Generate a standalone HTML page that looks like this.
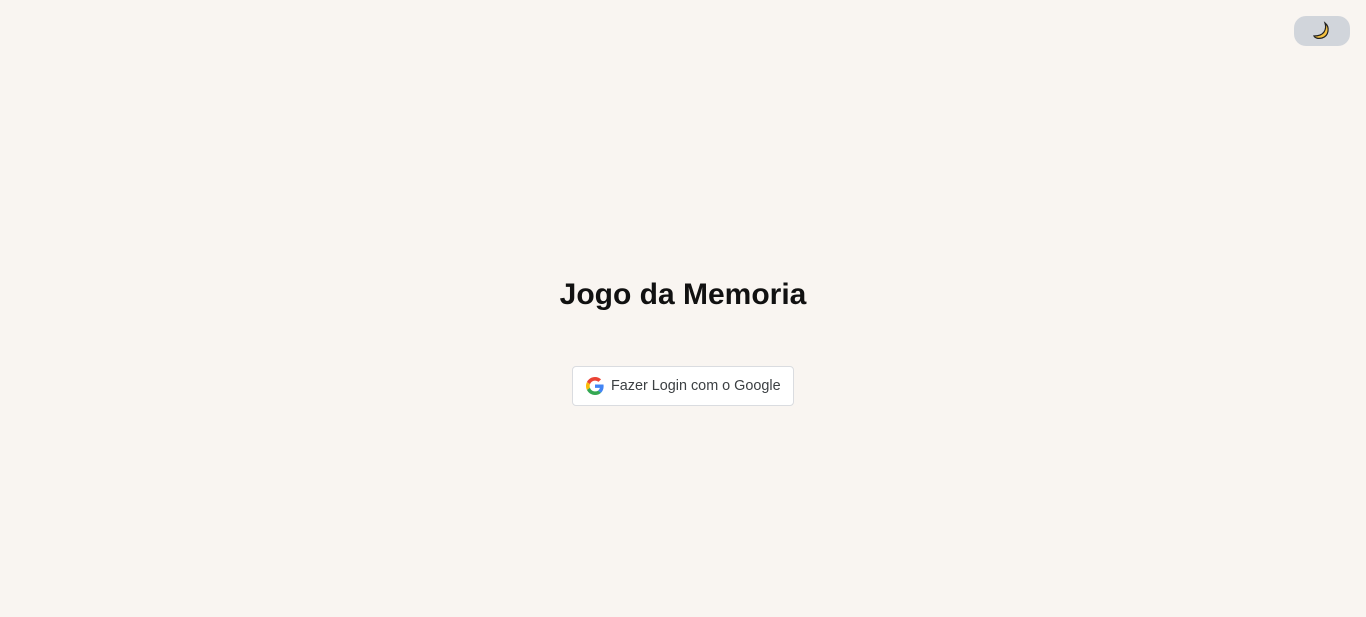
<!DOCTYPE html>
<html><head><meta charset="utf-8"><style>
html,body{margin:0;padding:0;width:1366px;height:617px;background:#f9f5f1;font-family:"Liberation Sans",sans-serif;overflow:hidden;position:relative}
.toggle{position:absolute;left:1294px;top:16px;width:56px;height:30px;background:#d1d5db;border-radius:12px;display:flex;align-items:center;justify-content:center}
h1{position:absolute;left:0;width:1366px;top:275px;margin:0;text-align:center;font-size:30px;font-weight:bold;color:#111;line-height:40px}
.btn{position:absolute;left:572px;top:366px;width:220px;height:38px;background:#fff;border:1px solid #dadce0;border-radius:4px;display:flex;align-items:center;box-sizing:content-box}
.btn svg{margin-left:13px}
.btn span{margin-left:7px;font-size:14.4px;color:#3c4043;margin-top:-1px}
</style></head><body>
<div class="toggle"><svg width="20" height="20" viewBox="0 0 20 20"><path d="M13 2 C18 6 17 15 10 17 C6 18 3 17 2 15 C6 15 10 14 12 11 C14 8 14 5 13 2Z" fill="#f5c242" stroke="#222" stroke-width="1.2"/></svg></div>
<h1>Jogo da Memoria</h1>
<div class="btn"><svg width="18" height="18" viewBox="0 0 48 48"><path fill="#EA4335" d="M24 9.5c3.54 0 6.71 1.22 9.210 3.6l6.85-6.85C35.9 2.38 30.47 0 24 0 14.62 0 6.51 5.38 2.56 13.22l7.98 6.19C12.43 13.72 17.74 9.5 24 9.5z"/><path fill="#4285F4" d="M46.98 24.55c0-1.57-.15-3.09-.38-4.55H24v9.02h12.94c-.58 2.96-2.26 5.480-4.78 7.18l7.73 6c4.51-4.18 7.09-10.36 7.09-17.65z"/><path fill="#FBBC05" d="M10.53 28.59c-.48-1.45-.76-2.99-.76-4.59s.27-3.14.76-4.59l-7.98-6.19C.92 16.46 0 20.12 0 24c0 3.88.92 7.54 2.56 10.78l7.970-6.19z"/><path fill="#34A853" d="M24 48c6.48 0 11.93-2.13 15.89-5.81l-7.73-6c-2.15 1.45-4.92 2.3-8.16 2.3-6.26 0-11.57-4.22-13.47-9.91l-7.98 6.19C6.51 42.62 14.62 48 24 48z"/></svg><span>Fazer Login com o Google</span></div>
</body></html>
